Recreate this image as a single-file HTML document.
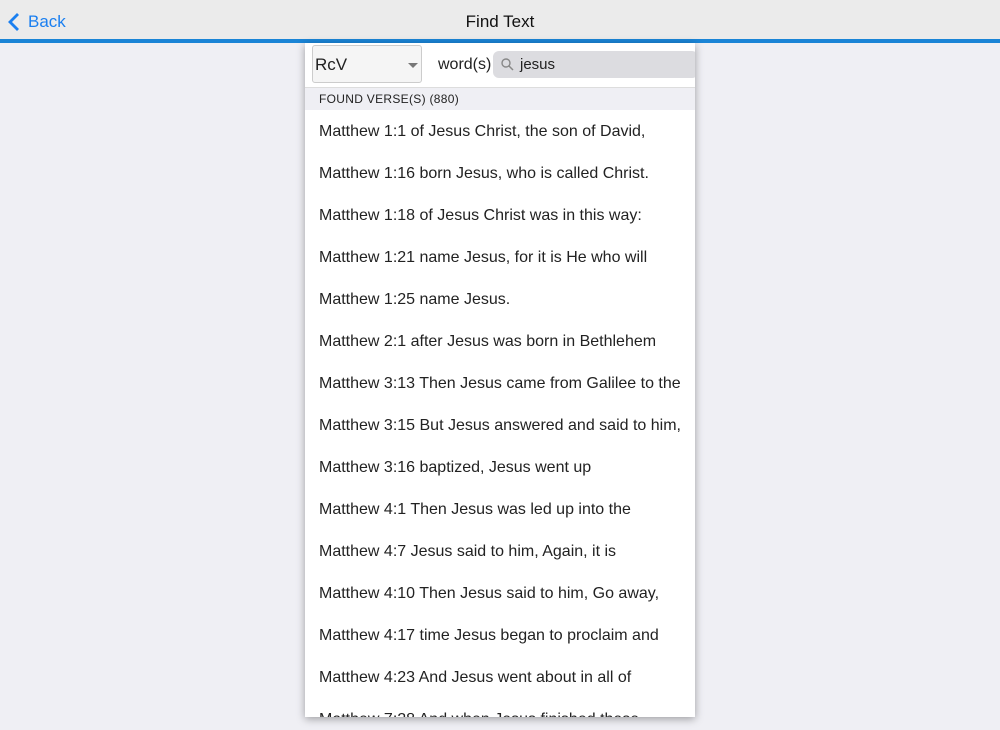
<!DOCTYPE html>
<html><head><style>
body{margin:0;width:1000px;height:730px;background:#efeff4;font-family:"Liberation Sans",sans-serif;position:relative;overflow:hidden}
.nav{position:absolute;left:0;top:0;width:1000px;height:39px;background:#ebebeb}
.line{position:absolute;left:0;top:39px;width:1000px;height:4px;background:#1a84d6}
.title{position:absolute;left:0;width:1000px;top:12px;text-align:center;font-size:17px;color:#111}
.back{position:absolute;left:28px;top:12px;font-size:17px;color:#1a7ff0}
.panel{position:absolute;left:305px;top:43px;width:390px;height:674px;background:#fff;box-shadow:0 2px 8px rgba(0,0,0,.35);overflow:hidden}
.sel{position:absolute;left:7px;top:2px;width:110px;height:38px;border:1px solid #ccc;border-radius:3px;background:#f5f5f5;font-size:17px;line-height:38px;padding-left:2px;box-sizing:border-box;color:#222}
.sel:after{content:"";position:absolute;right:3px;top:17px;border-left:5px solid transparent;border-right:5px solid transparent;border-top:5px solid #777}
.words{position:absolute;left:133px;top:13px;font-size:16px;color:#222}
.search{position:absolute;left:188px;top:8px;width:205px;height:27px;background:#dcdce0;border-radius:6px;font-size:15px;color:#222;line-height:27px;padding-left:27px;box-sizing:border-box}
.hdr{position:absolute;left:0;top:44px;width:390px;height:23px;background:#efeff4;border-top:1px solid #ddd;font-size:12px;line-height:23px;padding-left:14px;box-sizing:border-box;color:#222;letter-spacing:.3px}
.list{position:absolute;left:0;top:68px}
.row{height:42px;line-height:42px;padding-left:14px;font-size:16px;color:#222;white-space:nowrap}
</style></head><body>
<div class="nav"></div><div class="line"></div>
<svg style="position:absolute;left:7px;top:12px" width="14" height="20"><path d="M11 2 L3 10 L11 18" stroke="#1a7ff0" stroke-width="2.8" fill="none"/></svg>
<div class="back">Back</div>
<div class="title">Find Text</div>
<div class="panel">
<div class="sel">RcV</div>
<div class="words">word(s)</div>
<div class="search"><svg style="position:absolute;left:8px;top:7px" width="13" height="13"><circle cx="5" cy="5" r="4" stroke="#888" stroke-width="1.4" fill="none"/><path d="M8 8 L12 12" stroke="#888" stroke-width="1.5"/></svg>jesus</div>
<div class="hdr">FOUND VERSE(S) (880)</div>
<div class="list">
<div class="row">Matthew 1:1 of Jesus Christ, the son of David,</div>
<div class="row">Matthew 1:16 born Jesus, who is called Christ.</div>
<div class="row">Matthew 1:18 of Jesus Christ was in this way:</div>
<div class="row">Matthew 1:21 name Jesus, for it is He who will</div>
<div class="row">Matthew 1:25 name Jesus.</div>
<div class="row">Matthew 2:1 after Jesus was born in Bethlehem</div>
<div class="row">Matthew 3:13 Then Jesus came from Galilee to the</div>
<div class="row">Matthew 3:15 But Jesus answered and said to him,</div>
<div class="row">Matthew 3:16 baptized, Jesus went up</div>
<div class="row">Matthew 4:1 Then Jesus was led up into the</div>
<div class="row">Matthew 4:7 Jesus said to him, Again, it is</div>
<div class="row">Matthew 4:10 Then Jesus said to him, Go away,</div>
<div class="row">Matthew 4:17 time Jesus began to proclaim and</div>
<div class="row">Matthew 4:23 And Jesus went about in all of</div>
<div class="row">Matthew 7:28 And when Jesus finished these</div>
</div>
</div>
</body></html>
